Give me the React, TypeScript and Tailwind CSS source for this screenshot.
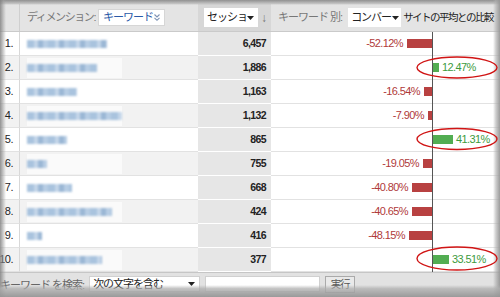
import React from "react";

const rows = [
  { n: 1, w: 80, s: "6,457", p: -52.12 },
  { n: 2, w: 70, s: "1,886", p: 12.47 },
  { n: 3, w: 50, s: "1,163", p: -16.54 },
  { n: 4, w: 95, s: "1,132", p: -7.9 },
  { n: 5, w: 40, s: "865", p: 41.31 },
  { n: 6, w: 20, s: "755", p: -19.05 },
  { n: 7, w: 45, s: "668", p: -40.8 },
  { n: 8, w: 85, s: "424", p: -40.65 },
  { n: 9, w: 15, s: "416", p: -48.15 },
  { n: 10, w: 75, s: "377", p: 33.51 },
];

function fmt(p: number) {
  return (p < 0 ? "-" : "") + Math.abs(p).toFixed(2) + "%";
}

function Caret() {
  return (
    <svg width="7" height="4" viewBox="0 0 7 4" className="shrink-0">
      <path d="M0 0h7L3.5 4z" fill="#222" />
    </svg>
  );
}

export default function App() {
  return (
    <div className="relative w-[500px] h-[297px] overflow-hidden bg-white font-['Liberation_Sans','Noto_Sans_CJK_JP',sans-serif] text-[#222]">
      {/* header */}
      <div className="flex h-[32px] pt-[4px] bg-[#e4e4e4] border-b border-[#cacaca] text-[11px] tracking-[-1px]">
        <div className="w-[20px] border-r border-[#cfcfcf]" />
        <div className="w-[178px] flex items-center pl-[7px] overflow-hidden">
          <span className="shrink-0 text-[#777] whitespace-nowrap tracking-[-1.4px]">ディメンション:</span>
          <div className="ml-[3px] shrink-0 w-[67px] h-[17px] bg-white border border-[#d6d6d6] flex items-center pl-[4px] pr-[3px]">
            <span className="text-[#2a5aa8] whitespace-nowrap">キーワード</span>
            <svg width="8" height="9" viewBox="0 0 8 9" className="ml-auto">
              <path d="M1.5 1.5l2.5 2.5 2.5-2.5M1.5 4.8l2.5 2.5 2.5-2.5" fill="none" stroke="#7d93b5" strokeWidth="1.1" />
            </svg>
          </div>
        </div>
        <div className="w-[73px] bg-[#d7d7d7] flex items-center pl-[6px]">
          <div className="w-[54px] h-[19px] bg-white flex items-center pl-[3px] pr-[4px] overflow-hidden">
            <span className="whitespace-nowrap text-[#222]">セッショ</span>
            <span className="ml-auto"><Caret /></span>
          </div>
          <span className="ml-[3px] text-[#777] text-[12px] tracking-normal">↓</span>
        </div>
        <div className="flex-1 flex items-center pl-[7px]">
          <span className="text-[#777] whitespace-nowrap">キーワード 別:</span>
          <div className="ml-[6px] w-[53px] h-[19px] bg-white flex items-center pl-[3px] pr-[2px] shrink-0">
            <span className="whitespace-nowrap">コンバー</span>
            <span className="ml-auto"><Caret /></span>
          </div>
          <span className="ml-[2px] whitespace-nowrap text-[#222] text-[10.5px] tracking-[-1.5px]">サイトの平均との比較</span>
        </div>
      </div>

      {/* rows */}
      {rows.map((r) => {
        const even = r.n % 2 === 0;
        const bw = Math.round(Math.abs(r.p) * 0.48);
        return (
          <div key={r.n} className="flex h-[24px]">
            <div
              className={`w-[20px] h-full flex items-center justify-end pr-[6px] text-[11px] tracking-[-0.5px] border-r border-b border-r-[#d8d8d8] border-b-[#e2e2e2] ${even ? "bg-[#f2f2f2]" : "bg-white"}`}
            >
              {r.n}.
            </div>
            <div
              className={`w-[178px] h-full flex items-center pl-[7px] border-b border-[#e2e2e2] ${even ? "bg-[#f2f2f2]" : "bg-white"}`}
            >
              <div className="h-[20px] w-[95px] flex items-center bg-white/60">
                <div
                  className="h-[8px] blur-[0.8px] bg-[repeating-linear-gradient(90deg,#a9c3de_0px,#a9c3de_7px,#c4d6e9_7px,#c4d6e9_11px,#9bb7d5_11px,#9bb7d5_16px,#b7cde4_16px,#b7cde4_21px)]"
                  style={{ width: r.w }}
                />
              </div>
            </div>
            <div className="w-[73px] h-full flex items-center justify-end pr-[5px] bg-[#e6e6e6] border-b border-white font-bold text-[10.5px] tracking-[-0.6px] text-[#222]">
              {r.s}
            </div>
            <div className="w-[161px] h-full flex items-center justify-end border-b border-[#e2e2e2] bg-white">
              {r.p < 0 && (
                <>
                  <span className="text-[11px] tracking-[-0.6px] text-[#b03a3a] mr-[4px]">{fmt(r.p)}</span>
                  <div className="h-[9px] bg-[#b84141]" style={{ width: bw }} />
                </>
              )}
            </div>
            <div className="w-px h-full bg-[#555]" />
            <div className="flex-1 h-full flex items-center border-b border-[#e2e2e2] bg-white">
              {r.p > 0 && (
                <>
                  <div className="h-[9px] bg-[#52ad52]" style={{ width: bw }} />
                  <span className="text-[11px] tracking-[-0.6px] text-[#3d9b3d] ml-[3px]">{fmt(r.p)}</span>
                </>
              )}
            </div>
          </div>
        );
      })}

      {/* footer */}
      <div className="flex items-start h-[25px] pt-[3px] bg-[#e2e2e2] border-t border-[#c6c6c6] text-[11px] tracking-[-1px]">
        <span className="mt-[1px] text-[#666] whitespace-nowrap">キーワード を検索:</span>
        <div className="ml-[5px] w-[111px] h-[16px] bg-white border border-[#d0d0d0] flex items-center pl-[3px] pr-[4px]">
          <span className="whitespace-nowrap text-[#222]">次の文字を含む</span>
          <span className="ml-auto"><Caret /></span>
        </div>
        <div className="ml-[5px] w-[115px] h-[16px] bg-white border border-[#d0d0d0]" />
        <div className="ml-[5px] w-[30px] h-[17px] bg-[#e9e9e9] border border-[#aaa] flex items-center justify-center text-[#555] text-[10.5px]">
          実行
        </div>
      </div>

      {/* frame shading */}
      <div className="pointer-events-none absolute left-0 right-0 top-0 h-[5px] bg-[linear-gradient(to_bottom,rgba(140,140,140,0.95),rgba(170,170,170,0.6)_70%,rgba(170,170,170,0))]" />
      <div className="pointer-events-none absolute left-0 top-0 bottom-0 w-[6px] bg-[linear-gradient(to_right,rgba(130,130,130,0.85),rgba(160,160,160,0.45)_60%,rgba(170,170,170,0))]" />
      <div className="pointer-events-none absolute right-0 top-0 bottom-0 w-[7px] bg-[linear-gradient(to_left,rgba(150,150,150,0.95),rgba(175,175,175,0.6)_60%,rgba(180,180,180,0))]" />
      <div className="pointer-events-none absolute left-0 right-0 bottom-0 h-[12px] bg-[linear-gradient(to_top,rgba(150,150,150,0.95),rgba(175,175,175,0.75)_70%,rgba(180,180,180,0))]" />

      {/* annotations */}
      <svg className="pointer-events-none absolute inset-0" width="500" height="297" viewBox="0 0 500 297">
        <ellipse cx="457" cy="67.5" rx="40" ry="10.5" fill="none" stroke="#d01414" strokeWidth="1.4" />
        <ellipse cx="457" cy="139" rx="40" ry="10.5" fill="none" stroke="#d01414" strokeWidth="1.4" />
        <ellipse cx="457" cy="258.5" rx="40" ry="11.5" fill="none" stroke="#d01414" strokeWidth="1.4" />
      </svg>
    </div>
  );
}
